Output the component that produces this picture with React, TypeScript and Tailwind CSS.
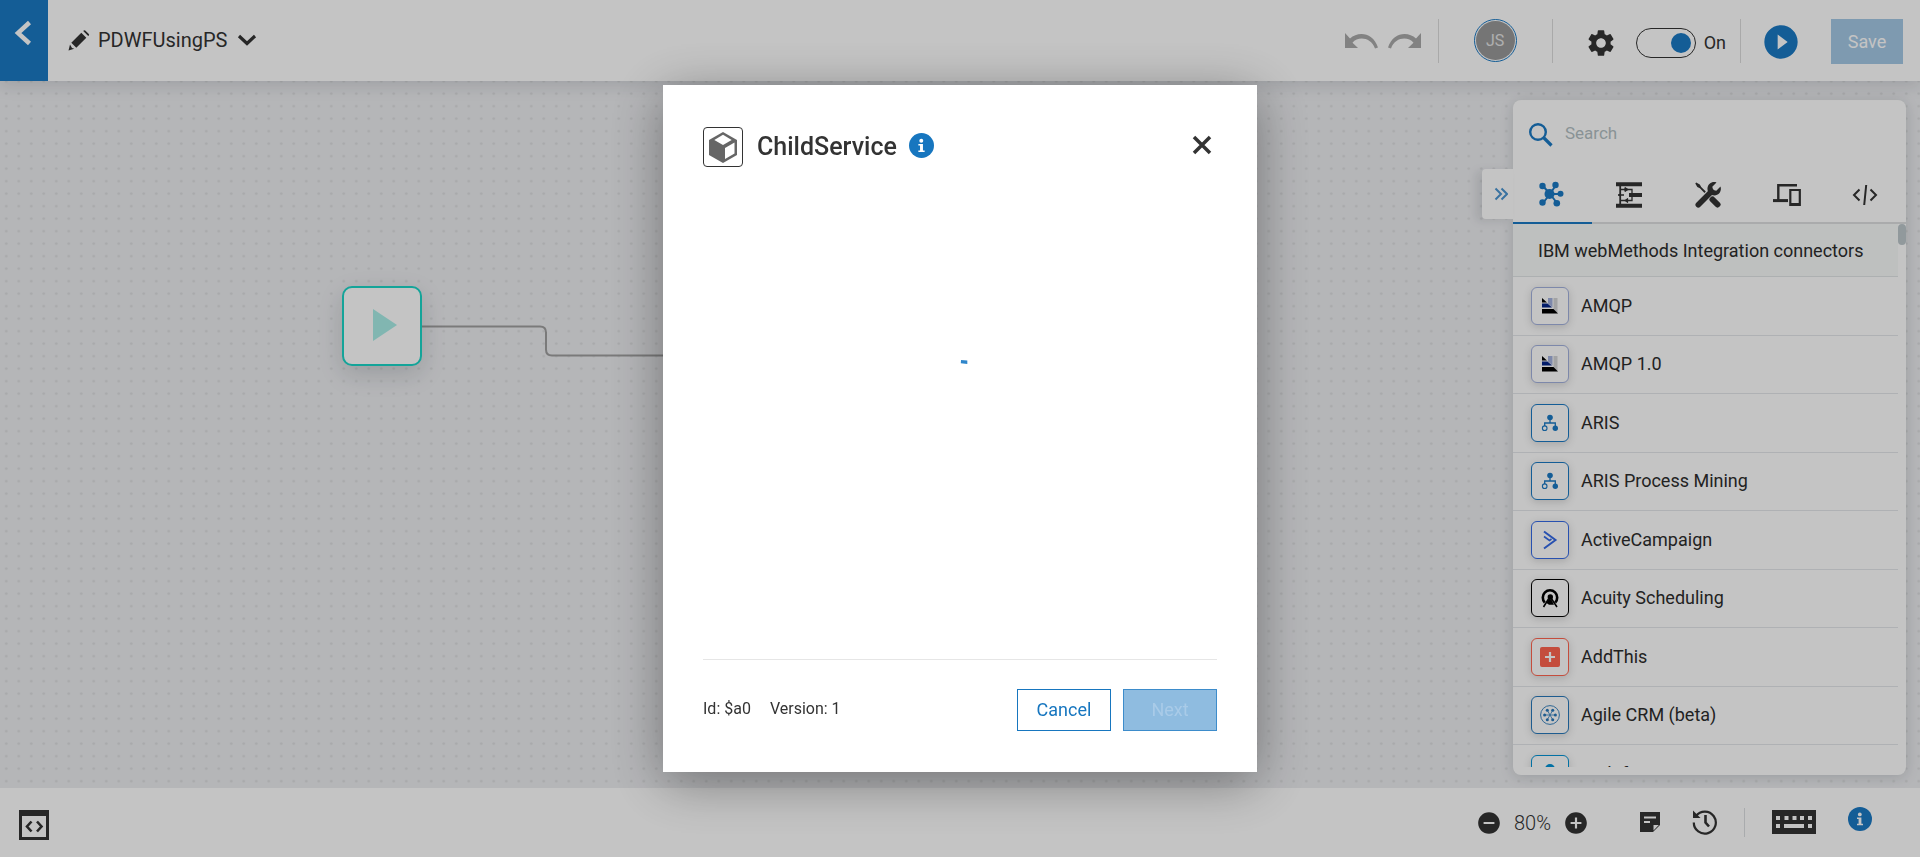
import type { ReactNode } from 'react';
import { MdAddCircle, MdPlayCircleFilled, MdRemoveCircle, MdSettings } from 'react-icons/md';

function Info({ className }: { className: string }) {
  return (
    <svg viewBox="0 0 24 24" className={className} aria-hidden="true">
      <circle cx="12" cy="12" r="12" fill="currentColor" />
      <circle cx="11.8" cy="7.4" r="1.9" fill="#fff" />
      <path d="M9 10.5h4.4v6.2H15v1.5H9v-1.5h1.6V12H9z" fill="#fff" />
    </svg>
  );
}

const amqp = (
  <svg viewBox="0 0 18 18" className="size-[18px]">
    <path d="M1 1l5 4.600H1z" fill="#000" />
    <path d="M7 1h4.500v9.500L7 6.500z" fill="#a3b1de" />
    <path d="M12.500 1h4v15l-4-4z" fill="#d3d4d6" />
    <path d="M1 6.500h5.500l4.500 4H1z" fill="#03258a" />
    <path d="M1 12h11.500l4.500 4.500H1z" fill="#000" />
  </svg>
);

const aris = (
  <svg viewBox="0 0 18 18" className="size-[18px]" fill="#1a79c4">
    <circle cx="9" cy="3.500" r="2.800" />
    <path d="M9 4v5M3.700 12V9h10.600v4" fill="none" stroke="#1a79c4" strokeWidth="1.300" />
    <circle cx="3.700" cy="14.200" r="2.300" fill="none" stroke="#1a79c4" strokeWidth="1.100" />
    <circle cx="14.300" cy="14.200" r="2.700" />
  </svg>
);

const activeCampaign = (
  <svg viewBox="0 0 20 20" className="size-5" fill="none" stroke="#356ae6" strokeWidth="2">
    <path d="M4 1.500L15.500 10 4 18.500" />
    <path d="M4 6.500l5.500 4 2-1.500" strokeWidth="1.600" />
  </svg>
);

const acuity = (
  <svg viewBox="0 0 20 20" className="size-5" fill="none" stroke="#000">
    <path d="M4.800 14.500A7.200 7.200 0 1 1 15.200 14.500" strokeWidth="2.600" />
    <path d="M8.500 11L3.500 19M11 10l6 9" strokeWidth="1.600" />
    <path d="M6.500 15l2.500 1.800h5l-2.500-5-2.500-1z" fill="#000" stroke="none" />
    <circle cx="10.300" cy="9" r="2.700" fill="#000" stroke="none" />
  </svg>
);

const addThis = (
  <svg viewBox="0 0 20 20" className="size-5">
    <rect width="20" height="20" rx="2" fill="#ff6550" />
    <path d="M10 5v10M5 10h10" stroke="#fff" strokeWidth="2.200" />
  </svg>
);

const agile = (
  <svg viewBox="0 0 20 20" className="size-5" fill="#2878ba" stroke="#2878ba">
    <circle cx="10" cy="10" r="9.400" fill="none" strokeWidth="0.900" />
    <path d="M4 10h12M7 4.800l6 10.400M13 4.800L7 15.200" strokeWidth="0.800" />
    <g stroke="none">
      <circle cx="4.600" cy="10" r="1.500" />
      <circle cx="15.400" cy="10" r="1.500" />
      <circle cx="7.300" cy="5.300" r="1.500" />
      <circle cx="12.700" cy="5.300" r="1.500" />
      <circle cx="7.300" cy="14.700" r="1.500" />
      <circle cx="12.700" cy="14.700" r="1.500" />
    </g>
  </svg>
);

const agiloft = (
  <svg viewBox="0 0 20 20" className="size-5" fill="#0393d6">
    <circle cx="10" cy="5" r="5" />
    <path d="M1 20a9 9 0 0 1 18 0z" />
  </svg>
);

const connectors: { name: string; border: string; icon: ReactNode }[] = [
  { name: 'AMQP', border: 'border-[#a3b1de]', icon: amqp },
  { name: 'AMQP 1.0', border: 'border-[#a3b1de]', icon: amqp },
  { name: 'ARIS', border: 'border-[#1a79c4]', icon: aris },
  { name: 'ARIS Process Mining', border: 'border-[#1a79c4]', icon: aris },
  { name: 'ActiveCampaign', border: 'border-[#356ae6]', icon: activeCampaign },
  { name: 'Acuity Scheduling', border: 'border-black', icon: acuity },
  { name: 'AddThis', border: 'border-[#ff6550]', icon: addThis },
  { name: 'Agile CRM (beta)', border: 'border-[#2878ba]', icon: agile },
  { name: 'Agiloft', border: 'border-[#0393d6]', icon: agiloft },
];

const tabs: { label: string; icon: ReactNode }[] = [
  {
    label: 'Connectors',
    icon: (
      <svg viewBox="0 0 26 26" className="size-[26px]" fill="currentColor">
        <path d="M12 13L5 5M12 13l6-9M12 13h11M12 13l-7 9M12 13l7 9" stroke="currentColor" strokeWidth="2" />
        <circle cx="11.500" cy="13" r="5" />
        <circle cx="4.500" cy="5" r="3.200" />
        <circle cx="17.500" cy="4" r="3.200" />
        <circle cx="22.500" cy="12.800" r="3" />
        <circle cx="4.500" cy="21.500" r="3.200" />
        <circle cx="18.800" cy="22.300" r="3.300" />
      </svg>
    ),
  },
  {
    label: 'Flow services',
    icon: (
      <svg viewBox="0 0 26 26" className="size-[26px]" fill="none" stroke="currentColor">
        <path d="M0 2.200h26M0 23.800h26M13 13h13" strokeWidth="4" />
        <path d="M4.200 3v20" strokeWidth="1.800" />
        <path d="M4 7.500h12v11H4M2 13h6M9 5.500v4M11.500 16.500v4" strokeWidth="1.300" />
        <path d="M9 5l4 2.500L9 10zM12 16l-4 2.500 4 2.500zM2 13l3-2v4z" fill="currentColor" stroke="none" />
      </svg>
    ),
  },
  {
    label: 'Tools',
    icon: (
      <svg viewBox="0 0 26 26" className="size-[26px]" fill="currentColor">
        <path d="M1.200.5l3.600 2L6.200 5l4.600 4.600-1.300 1.300L4.900 6.300 2.300 4.900.3 1.400z" />
        <path d="M17.500 17.500l5 5" stroke="currentColor" strokeWidth="6" strokeLinecap="round" />
        <path d="M3.300 22.700L16.500 9.500" stroke="currentColor" strokeWidth="5.600" strokeLinecap="round" />
        <path d="M21.500.5l-4.200 4.200.8 3.200 3.200.8L25.500 4.500C27 9 24 13.500 19.500 13.500c-4 0-7.500-3-7-7.500C13 2 17-1 21.500.5z" />
      </svg>
    ),
  },
  {
    label: 'Devices',
    icon: (
      <svg viewBox="0 0 28 24" className="h-6 w-7" fill="none" stroke="currentColor">
        <path d="M24 2.300H5.300V17" strokeWidth="2.400" />
        <path d="M0 17.600h15" strokeWidth="3" />
        <path d="M17.300 7h9.500v15h-9.500z" strokeWidth="2.200" />
        <path d="M17 21.500h10" strokeWidth="3" />
      </svg>
    ),
  },
  {
    label: 'Code',
    icon: (
      <svg viewBox="0 0 26 22" className="h-[22px] w-[26px]" fill="none" stroke="currentColor" strokeWidth="2">
        <path d="M7.500 5.500L2 11l5.500 5.500M18.500 5.500L24 11l-5.500 5.500M14.200 1l-2 20" />
      </svg>
    ),
  },
];

function TopBar() {
  return (
    <header className="relative z-10 flex h-[81px] shrink-0 items-center bg-white shadow-[0_4px_16px_rgba(20,30,40,0.14)]">
      <button aria-label="Back" className="flex h-full w-12 justify-center bg-[#1a79c4] pr-[2px] pt-5">
        <svg viewBox="0 0 18 26" className="h-[26px] w-[18px]" fill="none" stroke="#fff" strokeWidth="4.500">
          <path d="M15.500 2.500L4 13l11.500 10.500" />
        </svg>
      </button>
      <button className="ml-5 flex items-center gap-2 pb-px text-xl text-[#333]">
        <svg viewBox="0 0 22 22" className="size-[22px]" fill="#333" aria-hidden="true">
          <path d="M15.800 1.500a1 1 0 0 1 1.400 0l3.600 3.600a1 1 0 0 1 0 1.400l-.6.600-5-5zM13.300 3.700l5 5-10 10-5-5zM2 15.500L.5 21.400l5.800-1.700-2.300-.7z" />
        </svg>
        PDWFUsingPS
        <svg viewBox="0 0 20 12" className="ml-[2px] h-3 w-5" fill="none" stroke="#333" strokeWidth="3.200">
          <path d="M2 2l8 7.500L18 2" />
        </svg>
      </button>
      <div className="ml-auto flex h-full items-center pr-[17px]">
        <div className="flex">
          <button aria-label="Undo" className="text-[#a9a9a9]">
            <svg viewBox="0 0 34 16" className="h-4 w-[34px]" fill="currentColor">
              <path d="M1 0v15h13L8.500 9.700C14 3 27 4 31 15.500l3-1C29-1 14-2 6 5.500z" />
            </svg>
          </button>
          <button aria-label="Redo" className="ml-[10px] text-[#a9a9a9]">
            <svg viewBox="0 0 34 16" className="h-4 w-[34px]" fill="currentColor">
              <path d="M33 0v15H20l5.500-5.300C20 3 7 4 3 15.500l-3-1C5-1 20-2 28 5.500z" />
            </svg>
          </button>
        </div>
        <span className="ml-4 h-[44px] w-px bg-[#dcdcdc]" />
        <span className="ml-[35px] flex size-[43px] items-center justify-center rounded-full border border-[#1a79c4] p-px">
          <span className="flex size-full items-center justify-center rounded-full bg-[#999] text-base text-[#e4e4e4]">JS</span>
        </span>
        <span className="ml-[35px] h-[44px] w-px bg-[#dcdcdc]" />
        <button aria-label="Settings" className="ml-8 pt-1 text-[#333]">
          <MdSettings className="size-8" />
        </button>
        <label className="ml-[19px] flex items-center gap-2 pt-1 text-lg text-[#333]">
          <input type="checkbox" role="switch" defaultChecked className="peer sr-only" />
          <span className="flex h-[30px] w-[60px] items-center justify-end rounded-full border border-[#333] pr-1">
            <span className="size-5 rounded-full bg-[#1a79c4]" />
          </span>
          On
        </label>
        <span className="ml-[14px] h-[44px] w-px bg-[#dcdcdc]" />
        <button aria-label="Run" className="ml-5 pt-[3px] text-[#1a79c4]">
          <MdPlayCircleFilled className="size-10" />
        </button>
        <button disabled className="ml-[30px] mt-[2px] h-[45px] w-[72px] bg-[#a5c9e6] text-lg text-white">Save</button>
      </div>
    </header>
  );
}

function Panel() {
  return (
    <aside className="relative flex w-[393px] flex-col rounded-lg bg-white shadow-[0_2px_14px_rgba(20,30,40,0.16)]">
      <button aria-label="Collapse panel" className="absolute -left-[31px] top-[69px] flex h-[50px] w-[31px] items-center justify-end rounded-l bg-white pr-[5px] shadow-[-6px_2px_10px_rgba(20,30,40,0.10)]">
        <svg viewBox="0 0 14 14" className="size-[14px]" fill="none" stroke="#4b95d1" strokeWidth="2">
          <path d="M1.500 1.500L7 7l-5.500 5.500M7.500 1.500L13 7l-5.500 5.500" />
        </svg>
      </button>
      <label className="flex h-[69px] shrink-0 items-center gap-3 pl-4">
        <svg viewBox="0 0 24 24" className="size-6 shrink-0" fill="none" stroke="#1a79c4" aria-label="Search">
          <circle cx="9" cy="9" r="7.800" strokeWidth="2.400" />
          <path d="M14.500 14.500l8 8" strokeWidth="3.200" />
        </svg>
        <input type="text" placeholder="Search" className="w-full min-w-0 bg-transparent pb-[2px] text-[17px] text-[#333] outline-none placeholder:text-[#b3bfc3]" />
      </label>
      <div role="tablist" className="grid h-[55px] shrink-0 grid-cols-5 border-b-2 border-[#dedfe0]">
        {tabs.map((tab, i) => (
          <button
            key={tab.label}
            role="tab"
            aria-label={tab.label}
            aria-selected={i === 0}
            className={
              i === 0
                ? '-mb-[2px] flex items-center justify-center border-b-2 border-[#1a79c4] pb-[4px] pr-[2px] text-[#1a79c4]'
                : 'flex items-center justify-center pb-[2px] pr-[3px] text-[#333]'
            }
          >
            {tab.icon}
          </button>
        ))}
      </div>
      <div className="mb-2 flex min-h-0 flex-1 overflow-hidden">
        <div className="min-w-0 flex-1">
          <h2 className="flex h-[53px] items-center border-b border-[#e1e5e7] bg-[#f7faf9] pl-[25px] pt-px text-lg text-[#2d2d2d]">
            IBM webMethods Integration connectors
          </h2>
          <ul className="grid h-[702px] grid-rows-12">
            {connectors.map((c) => (
              <li key={c.name} className="flex items-center gap-3 border-b border-[#e4e7ea] pl-[18px] text-lg text-[#2d2d2d]">
                <span className={`flex size-[38px] items-center justify-center rounded-md border bg-white shadow-[0_2px_8px_rgba(0,0,0,0.16)] ${c.border}`}>
                  {c.icon}
                </span>
                {c.name}
              </li>
            ))}
          </ul>
        </div>
        <div className="w-2">
          <div className="h-[21px] rounded-full bg-[#bdc7cc]" />
        </div>
      </div>
    </aside>
  );
}

function Canvas() {
  return (
    <main className="relative flex min-h-0 flex-1 justify-end overflow-hidden bg-[#ecedf0] pb-[13px] pr-[14px] pt-[19px]">
      <svg className="absolute inset-0 size-full" aria-hidden="true">
        <defs>
          <pattern id="dots" y="6.400" width="12.500" height="12.500" patternUnits="userSpaceOnUse">
            <circle cx="6.250" cy="6.250" r="1.300" fill="#dadbdd" />
          </pattern>
        </defs>
        <rect width="100%" height="100%" fill="url(#dots)" />
        <path d="M422 245.500h118q6 0 6 6v17q0 6 6 6h248" fill="none" stroke="#9f9f9f" strokeWidth="2" />
      </svg>
      <button aria-label="Start" className="absolute left-[342px] top-[205px] flex size-20 items-center justify-center rounded-[10px] border-2 border-[#1ad6c8] bg-white pb-[2px] shadow-[0_8px_24px_rgba(20,30,40,0.16)]">
        <svg viewBox="0 0 24 32" className="ml-[5px] h-8 w-6" fill="#a8ede7">
          <path d="M0 0l24 16L0 32z" />
        </svg>
      </button>
      <Panel />
    </main>
  );
}

function BottomBar() {
  return (
    <footer className="flex h-[69px] shrink-0 items-center bg-white px-[19px] text-[#333]">
      <button aria-label="Code view" className="mt-1">
        <svg viewBox="0 0 30 30" className="size-[30px]" fill="none" stroke="#333">
          <path d="M1.500 3h27v25.500h-27z" strokeWidth="3" />
          <path d="M0 3h30" strokeWidth="6" />
          <path d="M12.500 11.500L8 16.500l4.500 5M18 11.500l4.500 5-4.500 5" strokeWidth="2.600" />
        </svg>
      </button>
      <div className="ml-auto flex items-center pr-[29px]">
        <button aria-label="Zoom out" className="pt-px">
          <MdRemoveCircle className="size-[26px]" />
        </button>
        <span className="mx-3 pt-px text-xl font-light">80%</span>
        <button aria-label="Zoom in" className="pt-px">
          <MdAddCircle className="size-[26px]" />
        </button>
        <button aria-label="Notes" className="ml-[51px] pb-px">
          <svg viewBox="0 0 20 20" className="size-5">
            <path d="M0 0h20v13l-7 7H0z" fill="#333" />
            <path d="M4 5.500h12M4 10h6" stroke="#fff" strokeWidth="2" />
            <path d="M13.500 18.500v-5.500h5.300z" fill="#fff" />
          </svg>
        </button>
        <button aria-label="History" className="ml-8 pb-[2px]">
          <svg viewBox="0 0 26 26" className="size-[26px]" fill="none" stroke="#333">
            <path d="M4 7a11 11 0 1 1-2.200 6.500" strokeWidth="2.200" />
            <path d="M1 1.500v7.500h7.500z" fill="#333" stroke="none" />
            <path d="M13.500 6v7.500l3.500 4" strokeWidth="2.600" />
          </svg>
        </button>
        <span className="ml-[26px] h-[29px] w-px bg-[#dcdfe2]" />
        <button aria-label="Keyboard shortcuts" className="ml-[27px] pb-[2px]">
          <svg viewBox="0 0 44 24" className="h-6 w-11">
            <path d="M0 0h44v24H0z" fill="#333" />
            <path d="M4 8h4M12.500 8h4M20.500 8h4M28 8h4M36 8h4M4 16h4M12 16h20M36 16h4" stroke="#fff" strokeWidth="4" />
          </svg>
        </button>
        <button aria-label="Information" className="ml-8 pb-2">
          <Info className="size-6 text-[#1a79c4]" />
        </button>
      </div>
    </footer>
  );
}

function ServiceDialog() {
  return (
    <div className="fixed inset-0 z-20 flex items-center justify-center bg-black/23">
      <section role="dialog" aria-modal="true" aria-labelledby="dialog-title" className="flex h-[687px] w-[594px] flex-col bg-white px-10 pb-10 pt-[42px] text-[#333] shadow-[0_10px_50px_rgba(0,0,0,0.38)]">
        <div className="flex items-center">
          <span className="flex size-10 items-center justify-center rounded border border-[#333]">
            <svg viewBox="0 0 28 31" className="h-[31px] w-7">
              <path d="M14 0l14 8v15l-14 8L0 23V8z" fill="#666" />
              <path d="M14 2.700l8.700 5.200L14 13 5.300 7.900z" fill="#fff" />
              <path d="M16 16l9.500-5.500v11L16 27z" fill="#fff" />
            </svg>
          </span>
          <h1 id="dialog-title" className="ml-[14px] text-[25px] font-medium">ChildService</h1>
          <button aria-label="About this service" className="ml-3 pb-1 text-[#1776bf]">
            <Info className="size-[25px]" />
          </button>
          <button aria-label="Close" className="ml-auto mr-[5px] pb-1">
            <svg viewBox="0 0 20 20" className="size-5" fill="none" stroke="#333" strokeWidth="3.500">
              <path d="M2 2l16 16M18 2L2 18" />
            </svg>
          </button>
        </div>
        <div role="status" aria-label="Loading" className="flex flex-1 justify-center pl-2 pt-[193px]">
          <svg viewBox="0 0 8 4" className="h-1 w-2">
            <path d="M1 0L7.300.500v3.500L.8 3.300z" fill="#2e86cb" />
          </svg>
        </div>
        <div className="flex items-start border-t border-[#e6e6e6] pb-px pt-[29px]">
          <p className="flex gap-[19px] pt-[9px] text-base leading-[22px]">
            <span>Id: $a0</span>
            <span>Version: 1</span>
          </p>
          <button className="ml-auto h-[42px] w-[94px] border border-[#1776bf] text-lg text-[#1776bf]">Cancel</button>
          <button disabled className="ml-3 h-[42px] w-[94px] border border-[#3d8ccb] bg-[#8fbce0] text-lg text-[#a9cbe8]">Next</button>
        </div>
      </section>
    </div>
  );
}

export default function App() {
  return (
    <div className="flex h-screen flex-col overflow-hidden font-[Roboto,sans-serif]">
      <TopBar />
      <Canvas />
      <BottomBar />
      <ServiceDialog />
    </div>
  );
}
